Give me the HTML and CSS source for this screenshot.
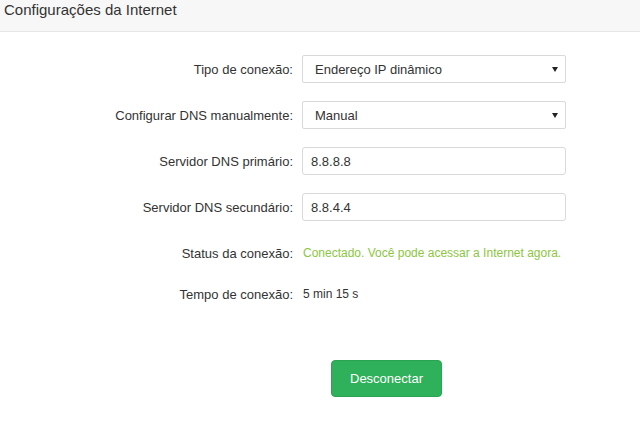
FILE: index.html
```html
<!DOCTYPE html>
<html lang="pt">
<head>
<meta charset="utf-8">
<title>Configurações da Internet</title>
<link rel="stylesheet" href="styles.css">
</head>
<body>
<header class="page-header">
  <h1 class="page-title">Configurações da Internet</h1>
</header>
<main class="form">
  <div class="row">
    <label class="label">Tipo de conexão:</label>
    <div class="select-wrap">
      <select class="control select"><option>Endereço IP dinâmico</option></select>
      <svg class="arrow" width="6" height="5" viewBox="0 0 6 5"><path d="M0 0H6L3 5Z" fill="#222"/></svg>
    </div>
  </div>
  <div class="row">
    <label class="label">Configurar DNS manualmente:</label>
    <div class="select-wrap">
      <select class="control select"><option>Manual</option></select>
      <svg class="arrow" width="6" height="5" viewBox="0 0 6 5"><path d="M0 0H6L3 5Z" fill="#222"/></svg>
    </div>
  </div>
  <div class="row">
    <label class="label">Servidor DNS primário:</label>
    <input class="control input" type="text" value="8.8.8.8">
  </div>
  <div class="row">
    <label class="label">Servidor DNS secundário:</label>
    <input class="control input" type="text" value="8.8.4.4">
  </div>
  <div class="row row-text row-status">
    <span class="label">Status da conexão:</span>
    <span class="value value-ok">Conectado. Você pode acessar a Internet agora.</span>
  </div>
  <div class="row row-text row-time">
    <span class="label">Tempo de conexão:</span>
    <span class="value">5 min 15 s</span>
  </div>
  <div class="actions">
    <button class="btn" type="button">Desconectar</button>
  </div>
</main>
</body>
</html>
```
FILE: styles.css
```css
* { box-sizing: border-box; }
html, body { margin: 0; padding: 0; background: #fff; }
body {
  font-family: "Liberation Sans", Arial, sans-serif;
  color: #333;
  font-size: 13px;
}
.page-header {
  height: 32px;
  background: #f7f7f7;
  border-bottom: 1px solid #e6e6e6;
  padding: 0 4px;
  display: flex;
  align-items: center;
}
.page-title {
  margin: 0;
  font-size: 15px;
  font-weight: normal;
  color: #333;
  line-height: 1;
  margin-top: -12px;
}
.form {
  padding-top: 23px;
}
.row {
  display: flex;
  align-items: center;
  height: 28px;
  margin-bottom: 18px;
}
.label {
  width: 293px;
  text-align: right;
  margin-right: 9px;
  flex: none;
}
.select-wrap {
  position: relative;
  width: 264px;
  height: 28px;
}
.control {
  width: 264px;
  height: 28px;
  border: 1px solid #d9d9d9;
  border-radius: 2px;
  background: #fff;
  font-family: inherit;
  font-size: 13px;
  color: #333;
  padding: 0 12px;
  margin: 0;
  outline: none;
}
.select {
  -webkit-appearance: none;
  appearance: none;
}
.input {
  padding: 0 8px;
  border-radius: 3px;
}
.arrow {
  position: absolute;
  right: 8px;
  top: 12px;
  pointer-events: none;
}
.value { color: #333; font-size: 12px; margin-left: 1px; }
.value-ok { color: #8cc63f; }
.row-status { margin-bottom: 13px; }
.actions {
  padding-left: 331px;
  margin-top: 52px;
}
.btn {
  width: 111px;
  height: 37px;
  background: #2fb05a;
  border: 1px solid #2aa352;
  border-radius: 4px;
  color: #fff;
  font-family: inherit;
  font-size: 13px;
  padding: 0;
  cursor: pointer;
}
```
